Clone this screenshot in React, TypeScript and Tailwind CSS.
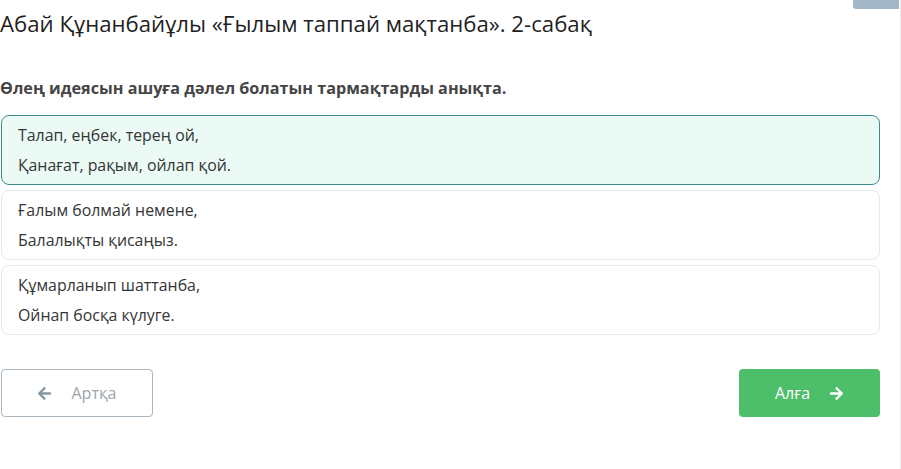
import { FaArrowLeft, FaArrowRight } from "react-icons/fa";

const options = [
  { lines: ["Талап, еңбек, терең ой,", "Қанағат, рақым, ойлап қой."], selected: true },
  { lines: ["Ғалым болмай немене,", "Балалықты қисаңыз."], selected: false },
  { lines: ["Құмарланып шаттанба,", "Ойнап босқа күлуге."], selected: false }
];

export default function App() {
  return (
    <div
      className="relative w-[901px] h-[469px] bg-white overflow-hidden"
      style={{ fontFamily: '"Open Sans", "Noto Sans", sans-serif' }}
    >
      {/* corner tab and edge line */}
      <div className="absolute right-[2px] top-0 w-[46px] h-[9px] bg-[#a3b8c6] rounded-bl-[3px]" />
      <div className="absolute right-0 top-0 w-px h-full bg-[#ececec]" />

      <div className="w-[880px] flex flex-col">
        <h1 className="text-[22.2px] leading-[28px] text-[#1f1f1f] mt-[10px]">
          Абай Құнанбайұлы «Ғылым таппай мақтанба». 2-сабақ
        </h1>

        <p className="mt-[40px] text-[16.2px] leading-[20px] font-bold text-[#454545]">
          Өлең идеясын ашуға дәлел болатын тармақтарды анықта.
        </p>

        <div className="mt-[17px] flex flex-col gap-[5px]">
          {options.map((o, i) => (
            <div
              key={i}
              className={
                o.selected
                  ? "ml-[1px] rounded-[8px] border border-[#3c8e8c] bg-[#ebfaf4] px-[16px] py-[4px]"
                  : "ml-[1px] rounded-[8px] border border-[#e6e9eb] bg-white px-[16px] py-[4px]"
              }
            >
              {o.lines.map((l) => (
                <div key={l} className="text-[15.9px] leading-[30px] text-[#353535]">
                  {l}
                </div>
              ))}
            </div>
          ))}
        </div>

        <div className="mt-[34px] flex justify-between">
          <button className="ml-[1px] w-[152px] h-[48px] rounded-[4px] border border-[#a9b5bf] bg-white flex items-center justify-center gap-[19px] text-[16px] text-[#9ba7b0]">
            <FaArrowLeft className="w-[15px] h-[15px] text-[#8596a3]" />
            <span>Артқа</span>
          </button>
          <button className="w-[141px] h-[48px] rounded-[4px] bg-[#4dbe69] flex items-center justify-center gap-[19px] text-[16px] text-white">
            <span>Алға</span>
            <FaArrowRight className="w-[15px] h-[15px]" />
          </button>
        </div>
      </div>
    </div>
  );
}
